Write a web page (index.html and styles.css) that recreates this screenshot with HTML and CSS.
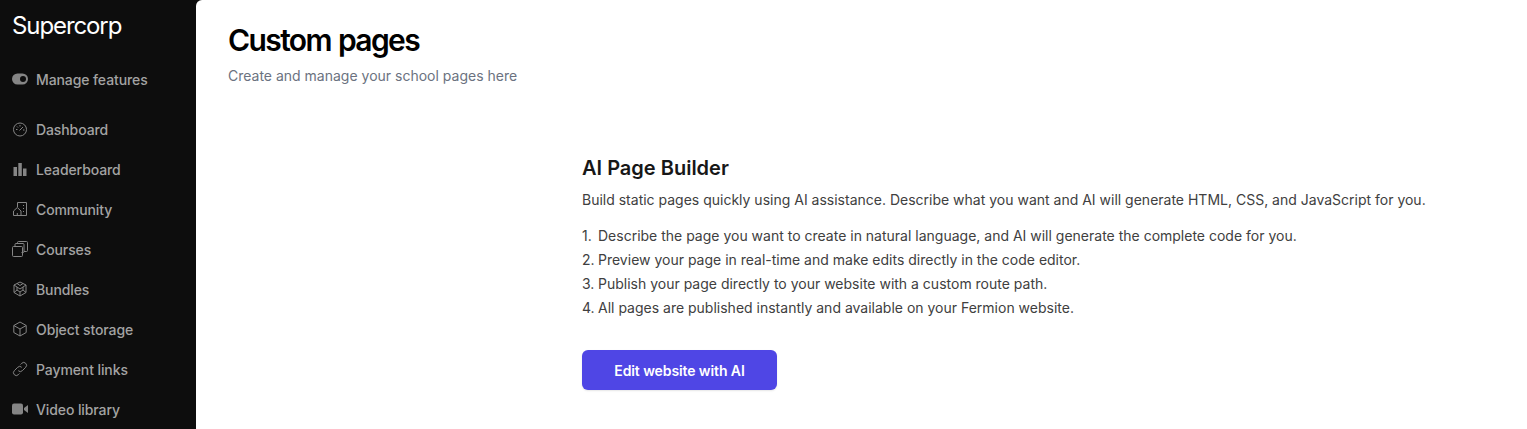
FILE: index.html
```html
<!DOCTYPE html>
<html lang="en">
<head>
  <meta charset="UTF-8" />
  <meta name="viewport" content="width=device-width, initial-scale=1.0"/>
  <title>Custom pages - Supercorp</title>
  <link rel="stylesheet" href="styles.css">
</head>
<body>
  <aside class="sidebar">
    <div class="brand">Supercorp</div>

    <a class="nav-item nav-manage" href="#">
      <svg class="icon" viewBox="0 0 16 16"><rect x="0" y="2.500" width="16" height="11" rx="5.500" fill="currentColor"/><circle cx="11" cy="8" r="3" fill="#0d0d0d"/></svg>
      Manage features
    </a>

    <nav class="nav-list">
      <a class="nav-item" href="#">
        <svg class="icon" viewBox="0 0 16 16" fill="none" stroke="currentColor"><circle cx="8" cy="8.500" r="6.500"/><path d="M7.500 9.500l3.500-3.500M4 8.500h1.500M11 9h1.500M8 4v1.500M5 5.500l1 1"/></svg>
        Dashboard
      </a>
      <a class="nav-item" href="#">
        <svg class="icon" viewBox="0 0 16 16" fill="currentColor"><rect x="1.500" y="6" width="3.500" height="9"/><rect x="6.300" y="2" width="3.500" height="13"/><rect x="11" y="7.500" width="3.500" height="7.500"/></svg>
        Leaderboard
      </a>
      <a class="nav-item" href="#">
        <svg class="icon" viewBox="0 0 16 16" fill="none" stroke="currentColor"><path d="M5.500 6V1.500h9v13h-13V10l3.800-3.500L9 10v4.500M5.300 14.500v-2.500M11 4.500h1M11 7.500h1M11 10.500h1"/></svg>
        Community
      </a>
      <a class="nav-item" href="#">
        <svg class="icon" viewBox="0 0 16 16" fill="none" stroke="currentColor"><rect x="0.500" y="5.500" width="10" height="10" rx="1"/><path d="M3 5.500V3.500a1 1 0 0 1 1-1h7a1 1 0 0 1 1 1v7a1 1 0 0 1-1 1h-1.500M5.500 2.500V1.500a1 1 0 0 1 1-1h8a1 1 0 0 1 1 1v8a1 1 0 0 1-1 1H12"/></svg>
        Courses
      </a>
      <a class="nav-item" href="#">
        <svg class="icon" viewBox="0 0 16 16" fill="none" stroke="currentColor"><path d="M8 1l6 3v7.500L8 15l-6-3.500V4zM5 2.500l3 2 3-2M2 4l3 2v3l3 2 3-2V6l3-2M8 11v4M5 9l-3 2.500M11 9l3 2.500M5 6l3 2 3-2"/></svg>
        Bundles
      </a>
      <a class="nav-item" href="#">
        <svg class="icon" viewBox="0 0 16 16" fill="none" stroke="currentColor"><path d="M8 1l6.200 3.500v7L8 15l-6.200-3.500v-7zM1.800 4.500L8 8l6.200-3.500M8 8v7"/></svg>
        Object storage
      </a>
      <a class="nav-item" href="#">
        <svg class="icon" viewBox="0 0 16 16" fill="none" stroke="currentColor"><path d="M6.300 9.700a2.800 2.800 0 0 0 4 0l3.400-3.400a2.800 2.800 0 0 0-4-4L8.500 3.500M9.700 6.300a2.800 2.800 0 0 0-4 0l-3.400 3.400a2.800 2.800 0 0 0 4 4l1.200-1.200"/></svg>
        Payment links
      </a>
      <a class="nav-item" href="#">
        <svg class="icon" viewBox="0 0 16 16" fill="currentColor"><rect x="0" y="2.500" width="11" height="11" rx="2"/><path d="M12 7l4-3v8l-4-3z"/></svg>
        Video library
      </a>
    </nav>
  </aside>

  <main class="content">
    <h1>Custom pages</h1>
    <p class="subtitle">Create and manage your school pages here</p>

    <section class="builder">
      <h2>AI Page Builder</h2>
      <p class="builder-intro">Build static pages quickly using AI assistance. Describe what you want and AI will generate HTML, CSS, and JavaScript for you.</p>
      <ol class="steps">
        <li><span class="num">1.</span>Describe the page you want to create in natural language, and AI will generate the complete code for you.</li>
        <li><span class="num">2.</span>Preview your page in real-time and make edits directly in the code editor.</li>
        <li><span class="num">3.</span>Publish your page directly to your website with a custom route path.</li>
        <li><span class="num">4.</span>All pages are published instantly and available on your Fermion website.</li>
      </ol>
      <a class="btn" href="#">Edit website with AI</a>
    </section>
  </main>
</body>
</html>
```

FILE: styles.css
```css
* {
  box-sizing: border-box;
}
html, body {
  height: 429px;
  overflow: hidden;
}
body {
  margin: 0;
  display: flex;
  background: #0d0d0d;
  font-family: Inter, Arial, sans-serif;
  color: #000;
}

.sidebar {
  width: 196px;
  flex-shrink: 0;
  padding: 11px 12px 0;
  color: #a3a3a3;
}
.brand {
  color: #fff;
  font-size: 24px;
  line-height: 30px;
  letter-spacing: -1.1px;
}
.nav-item {
  display: flex;
  align-items: center;
  gap: 8px;
  height: 40px;
  color: #a3a3a3;
  font-size: 14px;
  font-weight: 500;
  letter-spacing: -0.1px;
  text-decoration: none;
}
.nav-manage {
  margin-top: 18px;
  margin-bottom: 10px;
}
.icon {
  width: 16px;
  height: 16px;
  flex-shrink: 0;
  opacity: 0.8;
}

.content {
  flex: 1;
  background: #fff;
  border-top-left-radius: 6px;
  padding: 22px 32px 0;
}
.content h1 {
  margin: 0;
  font-size: 30px;
  line-height: 36px;
  font-weight: 600;
  letter-spacing: -1.6px;
  word-spacing: 1px;
}
.subtitle {
  margin: 8px 0 0;
  font-size: 14px;
  line-height: 20px;
  color: #6b7280;
}

.builder {
  margin: 68px 0 0 354px;
}
.builder h2 {
  margin: 0;
  font-size: 20px;
  line-height: 28px;
  font-weight: 600;
  color: #171717;
}
.builder-intro {
  margin: 8px 0 0;
  font-size: 14px;
  line-height: 20px;
  color: #404040;
}
.steps {
  list-style: none;
  margin: 14px 0 0;
  padding: 0;
  font-size: 14px;
  line-height: 24px;
  color: #404040;
}
.num {
  display: inline-block;
  width: 16px;
}
.btn {
  display: inline-flex;
  align-items: center;
  justify-content: center;
  width: 195px;
  height: 40px;
  margin-top: 30px;
  background: #4f46e5;
  color: #fff;
  border-radius: 6px;
  font-size: 14px;
  font-weight: 600;
  letter-spacing: -0.1px;
  text-decoration: none;
  box-shadow: 0 1px 2px rgba(0, 0, 0, 0.1);
}
```
